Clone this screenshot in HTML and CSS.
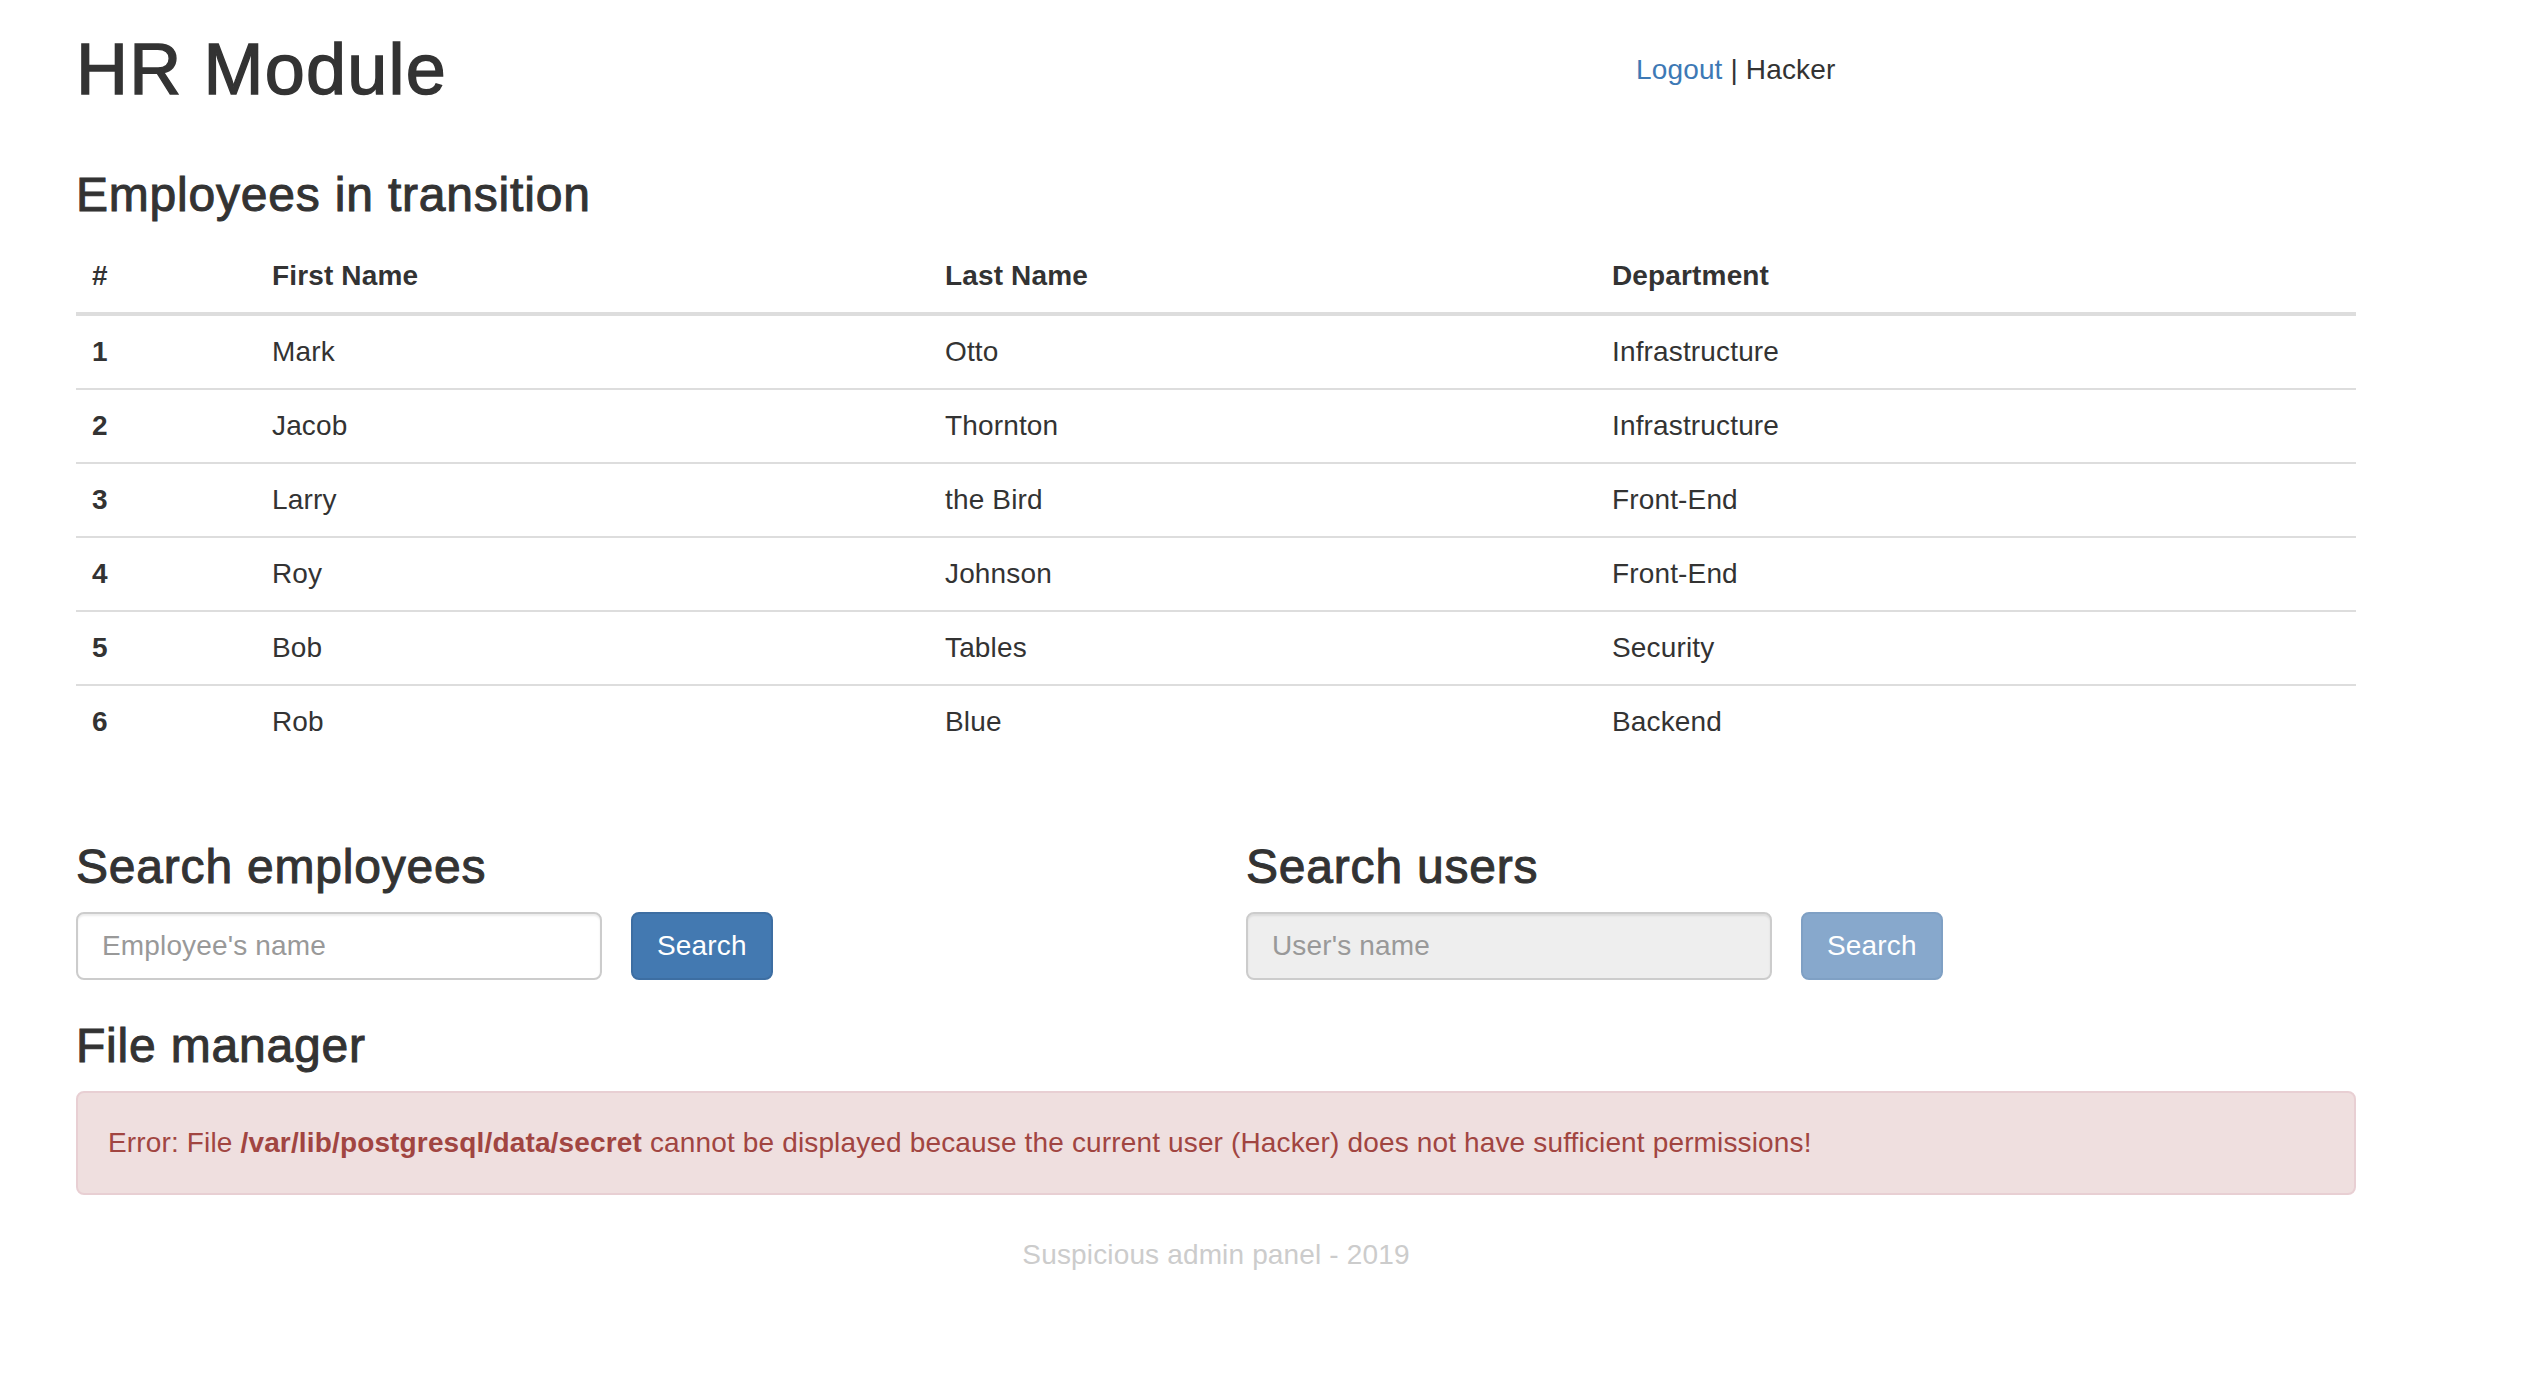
FILE: index.html
```html
<!DOCTYPE html>
<html lang="en">
<head>
<meta charset="utf-8">
<title>HR Module</title>
<link rel="stylesheet" href="styles.css">
</head>
<body>
<div class="container">
  <div class="header">
    <div class="header-main">
      <h1 class="title">HR Module</h1>
    </div>
    <div class="header-user">
      <a href="#" class="link">Logout</a> | Hacker
    </div>
  </div>

  <h3 class="section-title">Employees in transition</h3>
  <table class="table">
    <colgroup>
      <col class="c-id">
      <col class="c-first">
      <col class="c-last">
      <col class="c-dept">
    </colgroup>
    <thead>
      <tr><th>#</th><th>First Name</th><th>Last Name</th><th>Department</th></tr>
    </thead>
    <tbody>
      <tr><th>1</th><td>Mark</td><td>Otto</td><td>Infrastructure</td></tr>
      <tr><th>2</th><td>Jacob</td><td>Thornton</td><td>Infrastructure</td></tr>
      <tr><th>3</th><td>Larry</td><td>the Bird</td><td>Front-End</td></tr>
      <tr><th>4</th><td>Roy</td><td>Johnson</td><td>Front-End</td></tr>
      <tr><th>5</th><td>Bob</td><td>Tables</td><td>Security</td></tr>
      <tr><th>6</th><td>Rob</td><td>Blue</td><td>Backend</td></tr>
    </tbody>
  </table>

  <div class="search-row">
    <div class="search-col">
      <h3 class="section-title">Search employees</h3>
      <form class="search-form">
        <input class="form-control" type="text" placeholder="Employee's name">
        <button class="btn" type="button">Search</button>
      </form>
    </div>
    <div class="search-col">
      <h3 class="section-title">Search users</h3>
      <form class="search-form">
        <input class="form-control" type="text" placeholder="User's name" disabled>
        <button class="btn" type="button" disabled>Search</button>
      </form>
    </div>
  </div>

  <h3 class="section-title">File manager</h3>
  <div class="alert">Error: File <strong>/var/lib/postgresql/data/secret</strong> cannot be displayed because the current user (Hacker) does not have sufficient permissions!</div>

  <div class="footer">Suspicious admin panel - 2019</div>
</div>
</body>
</html>
```

FILE: styles.css
```css
html, body {
  margin: 0;
  padding: 0;
  background: #fff;
}
body {
  font-family: "Liberation Sans", Arial, Helvetica, sans-serif;
  font-size: 28px;
  line-height: 40px;
  color: #333;
  letter-spacing: 0.15px;
}
.container {
  width: 2280px;
  padding-left: 76px;
}
.header {
  display: flex;
}
.header-main {
  width: 1560px;
  flex: none;
}
.title {
  font-size: 72px;
  font-weight: 400;
  line-height: 79px;
  margin: 30px 0 20px 0;
  letter-spacing: 1.2px;
  -webkit-text-stroke: 1.4px #333;
}
.header-user {
  padding-top: 50px;
}
.link {
  color: #3d79b5;
  text-decoration: none;
}
.section-title {
  font-size: 48px;
  font-weight: 400;
  line-height: 52px;
  margin: 40px 0 19px 0;
  letter-spacing: 0.8px;
  -webkit-text-stroke: 1px #333;
}
.table {
  width: 2280px;
  border-collapse: collapse;
  border-spacing: 0;
  table-layout: fixed;
  margin-bottom: 43px;
}
.c-id { width: 180px; }
.c-first { width: 673px; }
.c-last { width: 667px; }
.c-dept { width: 760px; }
.table th, .table td {
  padding: 16px;
  text-align: left;
  vertical-align: top;
  line-height: 40px;
  border-top: 2px solid #ddd;
}
.table th { font-weight: bold; }
.table thead th {
  border-top: 0;
  border-bottom: 4px solid #ddd;
  vertical-align: bottom;
}
.table tbody tr:first-child th, .table tbody tr:first-child td {
  border-top: 0;
}
.search-row {
  display: flex;
}
.search-col {
  width: 1170px;
  flex: none;
}
.search-form {
  display: flex;
  gap: 29px;
  margin: 0;
}
.form-control {
  box-sizing: border-box;
  width: 526px;
  height: 68px;
  padding: 12px 24px;
  font-family: inherit;
  font-size: 28px;
  line-height: 40px;
  letter-spacing: 0.15px;
  color: #555;
  background: #fff;
  border: 2px solid #ccc;
  border-radius: 8px;
  box-shadow: inset 0 2px 2px rgba(0,0,0,.075);
  outline: none;
}
.form-control::placeholder { color: #999; }
.form-control:disabled {
  background: #eee;
  cursor: not-allowed;
}
.btn {
  box-sizing: border-box;
  height: 68px;
  padding: 12px 24px;
  font-family: inherit;
  font-size: 28px;
  line-height: 40px;
  letter-spacing: 0.15px;
  color: #fff;
  background: #4379b1;
  border: 2px solid #3d6ea2;
  border-radius: 8px;
}
.btn:disabled {
  background: #87a8cc;
  border-color: #7fa0c4;
}
.alert {
  padding: 30px;
  border: 2px solid #e8cfd3;
  border-radius: 8px;
  background: #efdfdf;
  color: #a14541;
  margin-bottom: 40px;
}
.footer {
  text-align: center;
  color: #ccc;
}
```
